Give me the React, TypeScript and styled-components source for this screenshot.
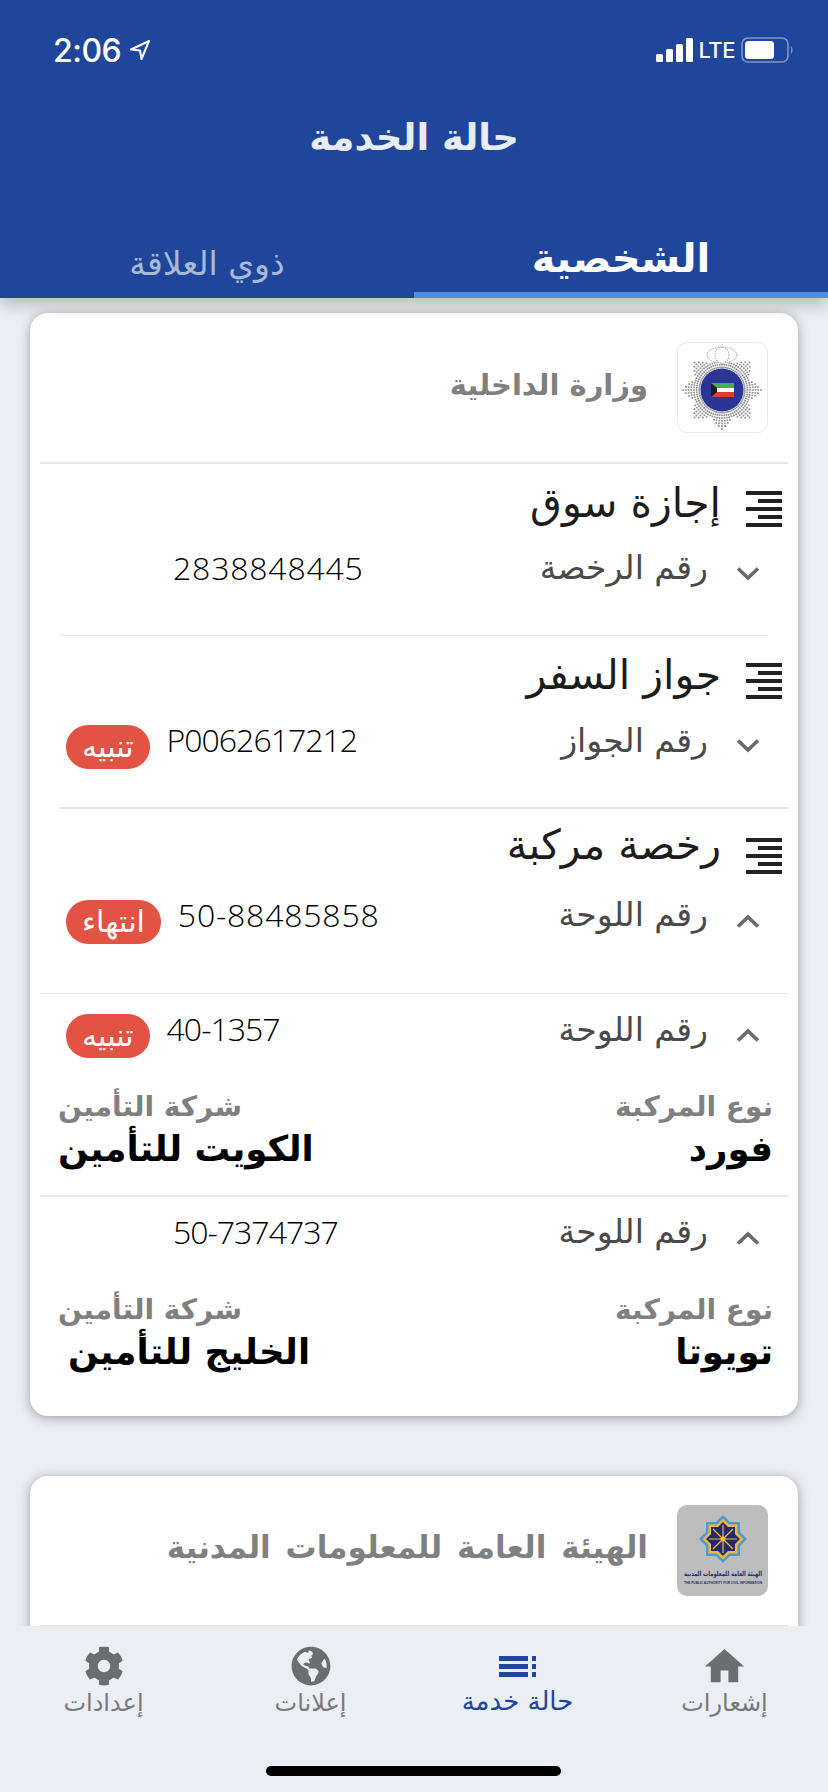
import styled, { createGlobalStyle } from 'styled-components';
import { FaCog, FaGlobeAmericas } from 'react-icons/fa';
import { MdHome } from 'react-icons/md';

const FONT = `'DejaVu Sans', sans-serif`;

const GlobalStyle = createGlobalStyle`
  html, body {
    margin: 0;
    padding: 0;
    background: #ebeff3;
  }
  * {
    box-sizing: border-box;
  }
`;

// the police star is made of dots running out along rays
const starDots = () => {
  const dots: { x: number; y: number }[] = [];
  const rays = 72;
  for (let i = 0; i < rays; i++) {
    const a = (i / rays) * Math.PI * 2;
    const t = Math.abs(((a / (Math.PI / 4)) % 1) - 0.5) * 2;
    const limit = 29 + 12 * t;
    for (let r = 20; r < limit; r += 2.7) {
      dots.push({ x: Math.cos(a) * r, y: Math.sin(a) * r });
    }
  }
  return dots;
};

const PoliceLogo = () => (
  <svg width="89" height="89" viewBox="0 0 89 89">
    <g transform="translate(44 47)" fill="#939393">
      {starDots().map((d) => (
        <rect key={`${d.x}_${d.y}`} x={d.x - 0.85} y={d.y - 0.85} width="1.7" height="1.7" />
      ))}
    </g>
    <g fill="#fff" stroke="#b5b5b5" strokeWidth="1.1" strokeDasharray="1.4 1">
      <ellipse cx="44" cy="12" rx="15" ry="8" />
      <ellipse cx="44" cy="12" rx="7" ry="8" />
      <path d="M44 1v4" />
    </g>
    <circle cx="44" cy="47" r="21.5" fill="#2a3596" />
    <path id="policeArc" d="M26.5 44a18 18 0 0 0 35 0" fill="none" />
    <text fontFamily="Liberation Sans" fontSize="5.6" fontWeight="700" fill="#fff" letterSpacing="0.2">
      <textPath href="#policeArc">KUWAIT POLICE</textPath>
    </text>
    <path id="policeTop" d="M30 38a17 17 0 0 1 28 0" fill="none" />
    <text fontFamily="DejaVu Sans" fontSize="4.4" fontWeight="700" fill="#fff">
      <textPath href="#policeTop">شرطة الكويت</textPath>
    </text>
    <path d="M33 40h23v5H33z" fill="#4ea75b" />
    <path d="M33 45h23v4H33z" fill="#fff" />
    <path d="M33 49h23v5H33z" fill="#e23b33" />
    <path d="M33 40l6 5v4l-6 5z" fill="#1c1c1c" />
  </svg>
);

const PaciLogo = () => (
  <svg width="91" height="91" viewBox="0 0 91 91">
    <g transform="translate(46 34)">
      <rect x="-17" y="-17" width="34" height="34" fill="#4a9bd1" />
      <rect x="-17" y="-17" width="34" height="34" fill="#4a9bd1" transform="rotate(45)" />
      <rect x="-14.5" y="-14.5" width="29" height="29" fill="#f0b93a" />
      <rect x="-14.5" y="-14.5" width="29" height="29" fill="#f0b93a" transform="rotate(45)" />
      <rect x="-12" y="-12" width="24" height="24" fill="#242a6e" />
      <rect x="-12" y="-12" width="24" height="24" fill="#242a6e" transform="rotate(45)" />
      <g stroke="#f0b93a" strokeWidth="1.2">
        <path d="M-14 0H14M0-14V14M-10-10L10 10M-10 10L10-10" />
      </g>
      <circle r="2.5" fill="#f0b93a" />
    </g>
    <text
      x="46"
      y="71"
      textAnchor="middle"
      direction="rtl"
      fontFamily="DejaVu Sans"
      fontSize="7"
      fontWeight="700"
      fill="#242a6e"
      textLength="78"
      lengthAdjust="spacingAndGlyphs"
    >
      الهيئة العامة للمعلومات المدنية
    </text>
    <text
      x="46"
      y="79"
      textAnchor="middle"
      fontFamily="Liberation Sans"
      fontSize="4"
      fontWeight="700"
      fill="#242a6e"
      textLength="78"
      lengthAdjust="spacingAndGlyphs"
    >
      THE PUBLIC AUTHORITY FOR CIVIL INFORMATION
    </text>
  </svg>
);

const ListBars = () => (
  <svg width="36" height="36" viewBox="0 0 36 36" fill="#222">
    <rect x="0" y="0" width="36" height="4" />
    <rect x="12" y="8" width="24" height="4" />
    <rect x="0" y="16" width="36" height="4" />
    <rect x="12" y="24" width="24" height="4" />
    <rect x="0" y="32" width="36" height="4" />
  </svg>
);

const Chevron = ({ up }: { up?: boolean }) => (
  <ChevronBox>
    <svg width="24" height="14" viewBox="0 0 24 14" fill="none" stroke="#6a6a6a" strokeWidth="3.6">
      <path d={up ? 'M2 12.5L12 3 22 12.5' : 'M2 1.5L12 11 22 1.5'} />
    </svg>
  </ChevronBox>
);

const ServiceBars = () => (
  <svg width="38" height="21" viewBox="0 0 38 21" fill="#20469b">
    <rect x="0" y="0" width="29" height="5" />
    <rect x="0" y="8" width="29" height="5" />
    <rect x="0" y="16" width="29" height="5" />
    <rect x="33" y="0" width="4" height="5" />
    <rect x="33" y="8" width="4" height="5" />
    <rect x="33" y="16" width="4" height="5" />
  </svg>
);

const App = () => (
  <Screen>
    <GlobalStyle />
    <Header>
      <StatusBar>
        <StatusLeft>
          <Time>2:06</Time>
          <svg width="22" height="22" viewBox="0 0 22 22" fill="none" stroke="#fff" strokeWidth="2">
            <path d="M20 2L2 10.5l9 1 1.5 8.5z" strokeLinejoin="round" />
          </svg>
        </StatusLeft>
        <StatusRight>
          <svg width="37" height="24" viewBox="0 0 37 24" fill="#fff">
            <rect x="0" y="16" width="7" height="8" rx="1.5" />
            <rect x="10" y="11" width="7" height="13" rx="1.5" />
            <rect x="20" y="6" width="7" height="18" rx="1.5" />
            <rect x="30" y="0" width="7" height="24" rx="1.5" />
          </svg>
          <Lte>LTE</Lte>
          <svg width="53" height="26" viewBox="0 0 53 26" fill="none">
            <rect x="1" y="1" width="46" height="24" rx="6" stroke="#7f96c8" strokeWidth="1.6" />
            <rect x="4" y="4" width="29" height="18" rx="3.5" fill="#fff" />
            <path d="M50 9c2 1 2 7 0 8z" fill="#7f96c8" />
          </svg>
        </StatusRight>
      </StatusBar>
      <PageTitle>حالة الخدمة</PageTitle>
      <Tabs>
        <Tab active>الشخصية</Tab>
        <Tab>ذوي العلاقة</Tab>
      </Tabs>
    </Header>

    <Content>
      <Card>
        <CardHead>
          <LogoBox>
            <PoliceLogo />
          </LogoBox>
          <CardName>وزارة الداخلية</CardName>
        </CardHead>
        <Divider />

        <Section>
          <SectionTitle>
            <ListBars />
            <TitleText>إجازة سوق</TitleText>
          </SectionTitle>
          <Row>
            <Chevron />
            <RowLabel>رقم الرخصة</RowLabel>
            <RowValue inset={143}>
              <ValueNumber>2838848445</ValueNumber>
            </RowValue>
          </Row>
        </Section>
        <Divider left={30} right={30} />

        <Section>
          <SectionTitle>
            <ListBars />
            <TitleText>جواز السفر</TitleText>
          </SectionTitle>
          <Row>
            <Chevron />
            <RowLabel>رقم الجواز</RowLabel>
            <RowValue inset={36}>
              <Pill>تنبيه</Pill>
              <ValueNumber tight>P0062617212</ValueNumber>
            </RowValue>
          </Row>
        </Section>
        <Divider left={30} />

        <Section tight>
          <SectionTitle>
            <ListBars />
            <TitleText raised>رخصة مركبة</TitleText>
          </SectionTitle>
          <Row>
            <Chevron up />
            <RowLabel>رقم اللوحة</RowLabel>
            <RowValue inset={36}>
              <Pill>انتهاء</Pill>
              <ValueNumber>50-88485858</ValueNumber>
            </RowValue>
          </Row>
        </Section>
        <Divider />

        <Vehicle>
          <Row>
            <Chevron up />
            <RowLabel>رقم اللوحة</RowLabel>
            <RowValue inset={36}>
              <Pill>تنبيه</Pill>
              <ValueNumber tight>40-1357</ValueNumber>
            </RowValue>
          </Row>
          <Details>
            <Detail>
              <DetailLabel>نوع المركبة</DetailLabel>
              <DetailValue>فورد</DetailValue>
            </Detail>
            <Detail end>
              <DetailLabel>شركة التأمين</DetailLabel>
              <DetailValue>الكويت للتأمين</DetailValue>
            </Detail>
          </Details>
        </Vehicle>
        <Divider />

        <Vehicle last>
          <Row>
            <Chevron up />
            <RowLabel>رقم اللوحة</RowLabel>
            <RowValue inset={143}>
              <ValueNumber tight>50-7374737</ValueNumber>
            </RowValue>
          </Row>
          <Details>
            <Detail>
              <DetailLabel>نوع المركبة</DetailLabel>
              <DetailValue>تويوتا</DetailValue>
            </Detail>
            <Detail end>
              <DetailLabel>شركة التأمين</DetailLabel>
              <DetailValue indent>الخليج للتأمين</DetailValue>
            </Detail>
          </Details>
        </Vehicle>
      </Card>

      <Card>
        <CardHead>
          <LogoBox grey>
            <PaciLogo />
          </LogoBox>
          <CardName wide>الهيئة العامة للمعلومات المدنية</CardName>
        </CardHead>
        <Divider />
        <CardRest />
      </Card>
    </Content>

    <TabBar>
      <BarItem>
        <BarIcon>
          <MdHome size={47} />
        </BarIcon>
        <BarLabel>إشعارات</BarLabel>
      </BarItem>
      <BarItem active>
        <BarIcon>
          <ServiceBars />
        </BarIcon>
        <BarLabel active>حالة خدمة</BarLabel>
      </BarItem>
      <BarItem>
        <BarIcon>
          <FaGlobeAmericas size={40} />
        </BarIcon>
        <BarLabel>إعلانات</BarLabel>
      </BarItem>
      <BarItem>
        <BarIcon>
          <FaCog size={40} />
        </BarIcon>
        <BarLabel>إعدادات</BarLabel>
      </BarItem>
      <HomeIndicator />
    </TabBar>
  </Screen>
);

export default App;

const Screen = styled.div`
  display: flex;
  flex-direction: column;

  width: 828px;
  height: 1792px;
  overflow: hidden;

  direction: rtl;
  background: #ebeff3;
  font-family: ${FONT};
`;

const Header = styled.header`
  position: relative;
  z-index: 2;

  display: flex;
  flex-direction: column;
  flex: none;

  height: 298px;
  padding-top: 30px;

  background: #20469b;
  box-shadow: 0 8px 14px rgba(0, 0, 0, 0.2);
`;

const StatusBar = styled.div`
  direction: ltr;

  display: flex;
  justify-content: space-between;
  align-items: center;

  height: 40px;
  padding: 0 34px 0 53px;

  color: #fff;
`;

const StatusLeft = styled.div`
  display: flex;
  align-items: center;
  gap: 8px;
`;

const Time = styled.span`
  font-family: 'Inter', sans-serif;
  font-size: 32px;
  font-weight: 500;
  letter-spacing: -0.5px;
`;

const StatusRight = styled.div`
  display: flex;
  align-items: center;
  gap: 6px;
`;

const Lte = styled.span`
  font-family: 'Inter', sans-serif;
  font-size: 22px;
  font-weight: 500;
  letter-spacing: -0.5px;
`;

const PageTitle = styled.h1`
  height: 40px;
  margin: 48px 0 0;

  font-size: 37px;
  font-weight: 700;
  line-height: 40px;
  text-align: center;
  color: #e8ecf4;
`;

const Tabs = styled.div`
  display: grid;
  grid-template-columns: 1fr 1fr;
  align-items: end;

  margin-top: auto;
`;

const Tab = styled.div<{ active?: boolean }>`
  height: ${(props) => (props.active ? '60px' : '54px')};

  border-bottom: ${(props) => (props.active ? '6px solid #4a90e8' : 'none')};

  font-size: ${(props) => (props.active ? '40px' : '33px')};
  font-weight: ${(props) => (props.active ? 700 : 400)};
  line-height: 40px;
  text-align: center;
  color: ${(props) => (props.active ? '#fff' : '#a9b9da')};
`;

const Content = styled.main`
  display: flex;
  flex-direction: column;
  flex: 1;
  gap: 60px;
  min-height: 0;
  overflow: hidden;

  padding: 15px 30px 0;
`;

const Card = styled.section`
  flex: none;

  border-radius: 18px;
  background: #fff;
  box-shadow: 0 2px 12px rgba(0, 0, 0, 0.34);
`;

const CardHead = styled.div`
  display: flex;
  align-items: center;
  gap: 29px;

  height: 149px;
  padding-right: 30px;
`;

const CardRest = styled.div`
  height: 60px;
`;

const LogoBox = styled.div<{ grey?: boolean }>`
  display: flex;
  justify-content: center;
  align-items: center;

  width: 91px;
  height: 91px;

  border-radius: 10px;
  border: ${(props) => (props.grey ? 'none' : '1px solid #e8e8ec')};
  background: ${(props) => (props.grey ? '#bdbdbd' : '#fff')};
`;

const CardName = styled.h2<{ wide?: boolean }>`
  margin: 0 0 6px;

  font-size: ${(props) => (props.wide ? '31px' : '29px')};
  font-weight: 700;
  word-spacing: ${(props) => (props.wide ? '4px' : '0')};
  color: #808080;
`;

const Divider = styled.div<{ left?: number; right?: number }>`
  height: 1.5px;
  margin-left: ${(props) => props.left ?? 10}px;
  margin-right: ${(props) => props.right ?? 10}px;

  background: #e6e6e8;
`;

const Section = styled.div<{ tight?: boolean }>`
  height: ${(props) => (props.tight ? '184px' : '171px')};
  padding-top: ${(props) => (props.tight ? '25px' : '23px')};
`;

const SectionTitle = styled.div`
  display: flex;
  align-items: center;
  gap: 25px;

  height: 44px;
  margin-bottom: 16px;
  padding-right: 16px;
`;

const TitleText = styled.span<{ raised?: boolean }>`
  margin-bottom: ${(props) => (props.raised ? '22px' : '12px')};

  font-size: 41px;
  line-height: 44px;
  color: #1c1c1c;
`;

const Row = styled.div`
  display: flex;
  align-items: center;
  gap: 28px;

  height: 42px;
  padding-right: 38px;
`;

const ChevronBox = styled.div`
  display: flex;
  margin-top: 12px;
`;

const RowLabel = styled.span`
  font-size: 33px;
  color: #4a4a4a;
`;

const RowValue = styled.div<{ inset: number }>`
  direction: ltr;

  display: flex;
  align-items: center;
  gap: 17px;

  margin-right: auto;
  padding-left: ${(props) => props.inset}px;
`;

const ValueNumber = styled.span<{ tight?: boolean }>`
  margin-bottom: 1px;

  font-family: 'Open Sans', sans-serif;
  font-size: 32px;
  font-weight: 300;
  letter-spacing: ${(props) => (props.tight ? '-1px' : '0.8px')};
  color: #000;
`;

const Pill = styled.span`
  direction: rtl;

  display: flex;
  justify-content: center;
  align-items: center;

  height: 44px;
  margin-top: 14px;
  padding: 0 16px;

  border-radius: 22px;
  background: #e25343;

  font-size: 30px;
  line-height: 44px;
  color: #fff;
`;

const Vehicle = styled.div<{ last?: boolean }>`
  height: ${(props) => (props.last ? '219px' : '201px')};
  padding-top: 14px;
`;

const Details = styled.div`
  display: flex;
  justify-content: space-between;

  margin-top: 42px;
  padding: 0 25px 0 28px;
`;

const Detail = styled.div<{ end?: boolean }>`
  display: flex;
  flex-direction: column;
  align-items: ${(props) => (props.end ? 'flex-end' : 'flex-start')};
  gap: 7px;
`;

const DetailLabel = styled.span`
  height: 30px;

  font-size: 28px;
  font-weight: 700;
  line-height: 30px;
  color: #808080;
`;

const DetailValue = styled.span<{ indent?: boolean }>`
  height: 40px;
  margin-left: ${(props) => (props.indent ? '10px' : '0')};

  font-size: 35.5px;
  font-weight: 700;
  line-height: 40px;
  color: #000;
`;

const TabBar = styled.nav`
  position: relative;
  z-index: 2;

  display: grid;
  grid-template-columns: repeat(4, 1fr);
  flex: none;

  height: 166px;
  padding-top: 18px;

  background: #ebeff3;
`;

const BarItem = styled.div<{ active?: boolean }>`
  display: flex;
  flex-direction: column;
  align-items: center;

  height: 80px;
  color: ${(props) => (props.active ? '#20469b' : '#6b6d70')};
`;

const BarIcon = styled.div`
  display: flex;
  justify-content: center;
  align-items: center;

  height: 44px;
`;

const BarLabel = styled.span<{ active?: boolean }>`
  margin-top: ${(props) => (props.active ? '-4px' : '-2px')};

  font-size: ${(props) => (props.active ? '26px' : '24px')};
  line-height: 34px;
  color: ${(props) => (props.active ? '#20469b' : '#77797c')};
`;

const HomeIndicator = styled.div`
  position: absolute;
  left: 266px;
  bottom: 16px;

  width: 295px;
  height: 10px;

  border-radius: 5px;
  background: #000;
`;
